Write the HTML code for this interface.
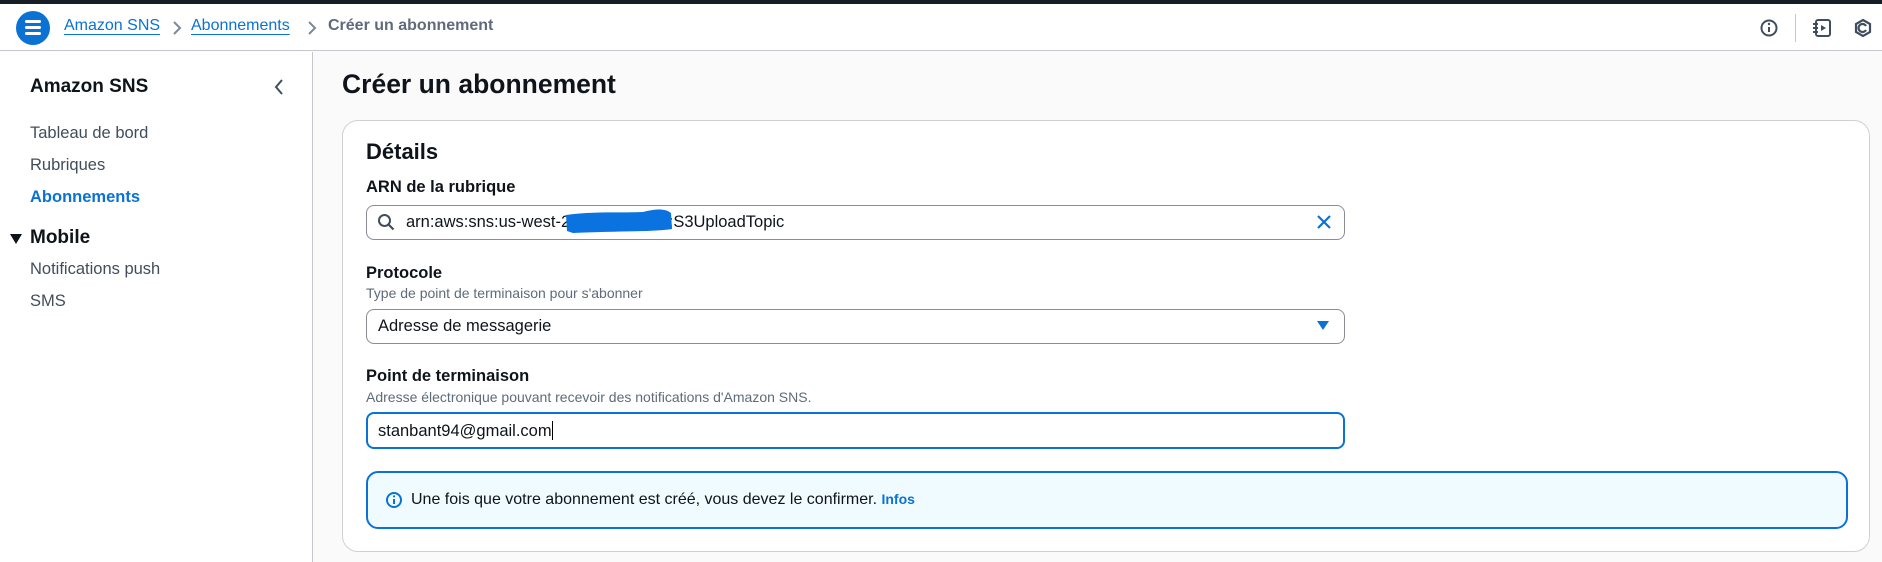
<!DOCTYPE html>
<html><head><meta charset="utf-8"><style>
*{box-sizing:border-box;margin:0;padding:0}
body{width:1882px;height:562px;overflow:hidden;font-family:"Liberation Sans",sans-serif;background:#fafafa;color:#0f141a;position:relative}
.a{position:absolute;white-space:nowrap}
.top{left:0;top:0;width:1882px;height:4px;background:#161d26}
.hdr{left:0;top:4px;width:1882px;height:47px;background:#fff;border-bottom:1px solid #c6c6cd}
.side{left:0;top:52px;width:313px;height:510px;background:#fff;border-right:1px solid #c6c6cd}
.bc{font-size:16px;top:17px}
.link{color:#0972d3;text-decoration:underline;text-underline-offset:4px}
.nav{font-size:16.5px;color:#414d5c;left:30px}
.card{left:342px;top:120px;width:1528px;height:432px;background:#fff;border:1px solid #d0d0d5;border-radius:16px}
.lbl{font-size:16.5px;font-weight:bold;left:366px}
.desc{font-size:14px;color:#5f6b7a;left:366px}
.inp{left:366px;width:979px;height:35px;border:1px solid #8c8c94;border-radius:8px;background:#fff}
.it{font-size:16.5px;top:8px}
</style></head><body>
<div class="a top"></div>
<div class="a hdr"></div>
<div class="a" style="left:16px;top:11px;width:34px;height:34px;border-radius:50%;background:#0972d3"></div>
<div class="a" style="left:25px;top:20px;width:16px;height:3px;background:#fff;border-radius:2px;box-shadow:0 6px 0 #fff,0 12px 0 #fff"></div>
<div class="a bc link" style="left:64px">Amazon SNS</div>
<svg class="a" style="left:171px;top:20px" width="12" height="16"><path d="M3 2l6 6-6 6" stroke="#7d8998" stroke-width="2" fill="none"/></svg>
<div class="a bc link" style="left:191px">Abonnements</div>
<svg class="a" style="left:306px;top:20px" width="12" height="16"><path d="M3 2l6 6-6 6" stroke="#7d8998" stroke-width="2" fill="none"/></svg>
<div class="a bc" style="left:328px;color:#5f6b7a;font-weight:bold">Créer un abonnement</div>
<svg class="a" style="left:1759px;top:18px" width="20" height="20"><circle cx="10" cy="10" r="7.5" stroke="#414d5c" stroke-width="2" fill="none"/><path d="M10 9v5" stroke="#414d5c" stroke-width="2"/><circle cx="10" cy="6" r="1.2" fill="#414d5c"/></svg>
<div class="a" style="left:1795px;top:14px;width:1px;height:28px;background:#c6c6cd"></div>
<svg class="a" style="left:1811px;top:18px" width="22" height="20"><rect x="5" y="2" width="14" height="16" rx="2" stroke="#414d5c" stroke-width="2" fill="none"/><path d="M2 6h5M2 10h5M2 14h5" stroke="#414d5c" stroke-width="2"/><path d="M10 7l5 3-5 3z" fill="#414d5c"/></svg>
<svg class="a" style="left:1853px;top:18px" width="20" height="20"><path d="M10 2l7 4v8l-7 4-7-4V6z" stroke="#414d5c" stroke-width="2.2" fill="none"/><path d="M13 8a4 4 0 1 0 0 4" stroke="#414d5c" stroke-width="2.2" fill="none"/></svg>

<div class="a side"></div>
<div class="a" style="left:30px;top:76px;font-size:19px;font-weight:bold">Amazon SNS</div>
<svg class="a" style="left:272px;top:78px" width="14" height="18"><path d="M10 2L4 9l6 7" stroke="#414d5c" stroke-width="2" fill="none"/></svg>
<div class="a nav" style="top:124px">Tableau de bord</div>
<div class="a nav" style="top:156px">Rubriques</div>
<div class="a nav" style="top:188px;color:#0972d3;font-weight:bold">Abonnements</div>
<svg class="a" style="left:9px;top:233px" width="14" height="12"><path d="M1 1h12L7 11z" fill="#0f141a"/></svg>
<div class="a" style="left:30px;top:227px;font-size:19px;font-weight:bold">Mobile</div>
<div class="a nav" style="top:260px">Notifications push</div>
<div class="a nav" style="top:292px">SMS</div>

<div class="a" style="left:342px;top:69px;font-size:26.5px;font-weight:bold">Créer un abonnement</div>
<div class="a card"></div>
<div class="a" style="left:366px;top:139px;font-size:22px;font-weight:bold">Détails</div>
<div class="a lbl" style="top:178px">ARN de la rubrique</div>
<div class="a inp" style="top:205px"></div>
<svg class="a" style="left:377px;top:213px" width="18" height="18"><circle cx="7.5" cy="7.5" r="5.5" stroke="#414d5c" stroke-width="2" fill="none"/><path d="M11.5 11.5l5 5" stroke="#414d5c" stroke-width="2.2"/></svg>
<div class="a it" style="left:406px;top:213px">arn:aws:sns:us-west-2:<span style="display:inline-block;width:94px"></span>:S3UploadTopic</div>
<svg class="a" style="left:563px;top:205px" width="112" height="32"><path d="M3 10 C30 6 60 8 80 7 C95 3 103 4 108 8 L109 24 C90 27 50 26 10 28 L4 26z" fill="#0a73e0"/></svg>
<svg class="a" style="left:1316px;top:214px" width="16" height="16"><path d="M2 2l12 12M14 2L2 14" stroke="#0972d3" stroke-width="2.2"/></svg>

<div class="a lbl" style="top:264px">Protocole</div>
<div class="a desc" style="top:285px">Type de point de terminaison pour s'abonner</div>
<div class="a inp" style="top:309px"></div>
<div class="a it" style="left:378px;top:317px">Adresse de messagerie</div>
<svg class="a" style="left:1316px;top:320px" width="14" height="12"><path d="M1 1h12L7 10z" fill="#0972d3"/></svg>

<div class="a lbl" style="top:367px">Point de terminaison</div>
<div class="a desc" style="top:389px">Adresse électronique pouvant recevoir des notifications d'Amazon SNS.</div>
<div class="a inp" style="top:412px;height:37px;border:2px solid #0972d3"></div>
<div class="a it" style="left:378px;top:421px">stanbant94@gmail.com<span style="display:inline-block;width:1px;height:19px;background:#000;vertical-align:-4px"></span></div>

<div class="a" style="left:366px;top:471px;width:1482px;height:58px;background:#f0fbff;border:2px solid #0972d3;border-radius:12px"></div>
<svg class="a" style="left:385px;top:491px" width="18" height="18"><circle cx="9" cy="9" r="7" stroke="#0972d3" stroke-width="2" fill="none"/><path d="M9 8v5" stroke="#0972d3" stroke-width="2"/><circle cx="9" cy="5.3" r="1.1" fill="#0972d3"/></svg>
<div class="a" style="left:411px;top:491px;font-size:16px">Une fois que votre abonnement est créé, vous devez le confirmer. <span style="color:#0972d3;font-weight:bold;font-size:14px">Infos</span></div>
</body></html>
